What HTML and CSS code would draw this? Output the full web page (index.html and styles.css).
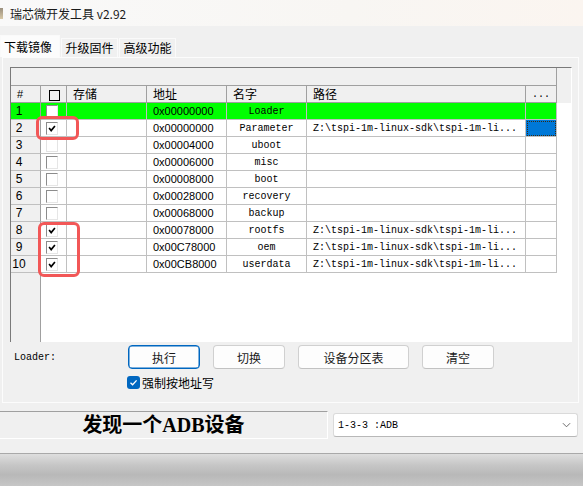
FILE: index.html
```html
<!DOCTYPE html>
<html>
<head>
    <meta charset="UTF-8">
    <link rel="stylesheet" href="styles.css">
</head>
<body>
    <div class="window">
        <div class="titlebar">
            <span class="app-icon"></span>
            <span class="title">瑞芯微开发工具 v2.92</span>
        </div>

        <div class="tabs">
            <div class="tab active">下载镜像</div>
            <div class="tab">升级固件</div>
            <div class="tab">高级功能</div>
        </div>

        <div class="panel">
            <div class="grid">
                <div class="band"><div class="band-cell"></div><div></div></div>

                <div class="row head">
                    <div class="cell num">#</div>
                    <div class="cell chk"><span class="head-box"></span></div>
                    <div class="cell">存储</div>
                    <div class="cell">地址</div>
                    <div class="cell">名字</div>
                    <div class="cell">路径</div>
                    <div class="cell more">...</div>
                    <div class="fill"></div>
                </div>

                <div class="row current">
                    <div class="cell num">1</div>
                    <div class="cell chk"><span class="box"></span></div>
                    <div class="cell"></div>
                    <div class="cell addr">0x00000000</div>
                    <div class="cell name">Loader</div>
                    <div class="cell path"></div>
                    <div class="cell"></div>
                    <div class="fill"></div>
                </div>
                <div class="row">
                    <div class="cell num">2</div>
                    <div class="cell chk"><span class="box"><svg viewBox="0 0 12 12"><path d="M2.5 5.5 L5 8.5 L9.5 3"/></svg></span></div>
                    <div class="cell"></div>
                    <div class="cell addr">0x00000000</div>
                    <div class="cell name">Parameter</div>
                    <div class="cell path">Z:\tspi-1m-linux-sdk\tspi-1m-li...</div>
                    <div class="cell picked"></div>
                    <div class="fill"></div>
                </div>
                <div class="row">
                    <div class="cell num">3</div>
                    <div class="cell chk"><span class="box faint"></span></div>
                    <div class="cell"></div>
                    <div class="cell addr">0x00004000</div>
                    <div class="cell name">uboot</div>
                    <div class="cell path"></div>
                    <div class="cell"></div>
                    <div class="fill"></div>
                </div>
                <div class="row">
                    <div class="cell num">4</div>
                    <div class="cell chk"><span class="box"></span></div>
                    <div class="cell"></div>
                    <div class="cell addr">0x00006000</div>
                    <div class="cell name">misc</div>
                    <div class="cell path"></div>
                    <div class="cell"></div>
                    <div class="fill"></div>
                </div>
                <div class="row">
                    <div class="cell num">5</div>
                    <div class="cell chk"><span class="box"></span></div>
                    <div class="cell"></div>
                    <div class="cell addr">0x00008000</div>
                    <div class="cell name">boot</div>
                    <div class="cell path"></div>
                    <div class="cell"></div>
                    <div class="fill"></div>
                </div>
                <div class="row">
                    <div class="cell num">6</div>
                    <div class="cell chk"><span class="box"></span></div>
                    <div class="cell"></div>
                    <div class="cell addr">0x00028000</div>
                    <div class="cell name">recovery</div>
                    <div class="cell path"></div>
                    <div class="cell"></div>
                    <div class="fill"></div>
                </div>
                <div class="row">
                    <div class="cell num">7</div>
                    <div class="cell chk"><span class="box"></span></div>
                    <div class="cell"></div>
                    <div class="cell addr">0x00068000</div>
                    <div class="cell name">backup</div>
                    <div class="cell path"></div>
                    <div class="cell"></div>
                    <div class="fill"></div>
                </div>
                <div class="row">
                    <div class="cell num">8</div>
                    <div class="cell chk"><span class="box"><svg viewBox="0 0 12 12"><path d="M2.5 5.5 L5 8.5 L9.5 3"/></svg></span></div>
                    <div class="cell"></div>
                    <div class="cell addr">0x00078000</div>
                    <div class="cell name">rootfs</div>
                    <div class="cell path">Z:\tspi-1m-linux-sdk\tspi-1m-li...</div>
                    <div class="cell"></div>
                    <div class="fill"></div>
                </div>
                <div class="row">
                    <div class="cell num">9</div>
                    <div class="cell chk"><span class="box"><svg viewBox="0 0 12 12"><path d="M2.5 5.5 L5 8.5 L9.5 3"/></svg></span></div>
                    <div class="cell"></div>
                    <div class="cell addr">0x00C78000</div>
                    <div class="cell name">oem</div>
                    <div class="cell path">Z:\tspi-1m-linux-sdk\tspi-1m-li...</div>
                    <div class="cell"></div>
                    <div class="fill"></div>
                </div>
                <div class="row">
                    <div class="cell num">10</div>
                    <div class="cell chk"><span class="box"><svg viewBox="0 0 12 12"><path d="M2.5 5.5 L5 8.5 L9.5 3"/></svg></span></div>
                    <div class="cell"></div>
                    <div class="cell addr">0x00CB8000</div>
                    <div class="cell name">userdata</div>
                    <div class="cell path">Z:\tspi-1m-linux-sdk\tspi-1m-li...</div>
                    <div class="cell"></div>
                    <div class="fill"></div>
                </div>

                <div class="grid-rest"><div class="rest-head"></div></div>

                <!-- 红框标注 -->
                <div class="mark mark-one"></div>
                <div class="mark mark-two"></div>
            </div>

            <div class="actions">
                <span class="loader-label">Loader:</span>
                <button class="btn primary">执行</button>
                <button class="btn">切换</button>
                <button class="btn wide">设备分区表</button>
                <button class="btn">清空</button>
            </div>

            <label class="force">
                <span class="force-box"><svg viewBox="0 0 13 13"><path d="M3.5 6.8 L5.6 8.8 L9.6 4.4"/></svg></span>
                强制按地址写
            </label>
        </div>

        <div class="statusbar">
            <div class="status">发现一个ADB设备</div>
            <div class="combo">
                <span>1-3-3 :ADB</span>
                <svg class="chevron" viewBox="0 0 10 6"><path d="M1 1 L5 5 L9 1"/></svg>
            </div>
        </div>
    </div>
    <div class="desk"></div>
</body>
</html>
```

FILE: styles.css
```css
:root {
    --face: #f0f0f0;
    --line: #c0c0c0;
    --dark-line: #a0a0a0;
    --green: #00ff00;
    --accent: #0067c0;
}

body {
    margin: 0;
    width: 583px;
    height: 486px;
    overflow: hidden;
    background: #c4c4c4;
    font-family: "Noto Sans CJK SC", "Liberation Sans", sans-serif;
    color: #000;
}

.window {
    height: 453px;
    background: var(--face);
    display: flex;
    flex-direction: column;
    border-bottom: 1px solid #a9a9a9;
}

.titlebar {
    height: 26px;
    display: flex;
    align-items: center;
    background: linear-gradient(90deg, #f9f9f9 0%, #f8f6f3 60%, #fbf5f0 100%);
    font-size: 12px;
    color: #1b1b1b;
}

.app-icon {
    width: 3px;
    height: 11px;
    background: linear-gradient(#9a8f7e, #d8c9a8);
}

.title {
    margin-left: 7px;
}

.tabs {
    margin-top: 9px;
    height: 22px;
    display: flex;
    align-items: flex-end;
}

.tab {
    box-sizing: border-box;
    width: 57px;
    height: 19px;
    margin-left: 1px;
    border: 1px solid #fafafa;
    border-bottom: none;
    background: #f0f0f0;
    font-size: 12px;
    line-height: 18px;
    text-align: center;
}

.tab.active {
    width: 60px;
    height: 22px;
    margin-left: 0;
    background: #fcfcfc;
    line-height: 21px;
    text-align: left;
    padding-left: 3px;
}

.panel {
    box-sizing: border-box;
    height: 346px;
    margin: 0 4px 0 2px;
    border: 1px solid #fcfcfc;
    padding: 9px 0 0 7px;
}

/* 分区表格 */
.grid {
    position: relative;
    box-sizing: border-box;
    width: 562px;
    height: 275px;
    background: #fff;
    border-top: 1px solid #7a7a7a;
    border-left: 1px solid #7a7a7a;
    border-right: 1px solid #fff;
    display: flex;
    flex-direction: column;
}

.band {
    display: grid;
    grid-template-columns: 546px 1fr;
    height: 18px;
    flex-shrink: 0;
    background: var(--face);
}

.band-cell {
    border-right: 1px solid var(--dark-line);
    border-bottom: 1px solid var(--dark-line);
}

.row {
    display: grid;
    grid-template-columns: 30px 26px 80px 80px 80px 219px 31px 1fr;
    height: 17px;
    flex-shrink: 0;
}

.cell {
    box-sizing: border-box;
    border-right: 1px solid var(--line);
    border-bottom: 1px solid var(--line);
    font-size: 11px;
    line-height: 17px;
    white-space: nowrap;
    overflow: hidden;
}

.head .cell {
    background: var(--face);
    border-color: var(--dark-line);
    font-size: 12px;
    line-height: 16px;
    padding-left: 6px;
}

.head .fill {
    background: var(--face);
}

.head .num {
    font-family: "Liberation Sans", sans-serif;
    font-size: 11px;
    text-align: left;
}

.head .chk {
    padding-left: 8px;
    display: flex;
    align-items: center;
}

.head-box {
    width: 9px;
    height: 9px;
    border: 1px solid #000;
}

.head .more {
    padding-left: 0;
    text-align: center;
    font-family: "Liberation Mono", monospace;
    font-size: 10px;
    line-height: 18px;
}

.num {
    background: var(--face);
    border-right-color: var(--dark-line);
    padding-right: 13px;
    text-align: center;
    font-family: "Liberation Sans", sans-serif;
    font-size: 12px;
}

.chk {
    padding: 2px 0 0 5px;
}

.box {
    display: block;
    box-sizing: border-box;
    width: 12px;
    height: 13px;
    background: #fff;
    border-top: 1px solid #8c8c8c;
    border-left: 1px solid #8c8c8c;
    border-right: 1px solid #e6e6e6;
    border-bottom: 1px solid #e6e6e6;
}

.box.faint {
    border-color: #e4e4e4;
}

.box svg {
    display: block;
    width: 10px;
    height: 11px;
}

.box path {
    fill: none;
    stroke: #000;
    stroke-width: 2;
}

.addr {
    padding-left: 6px;
    font-family: "Liberation Sans", sans-serif;
}

.name {
    text-align: center;
    font-family: "Liberation Mono", monospace;
    font-size: 10px;
}

.path {
    padding-left: 6px;
    font-family: "Liberation Mono", monospace;
    font-size: 10px;
}

.current .cell {
    background: var(--green);
}

.current .chk .box {
    background: #fff;
}

.picked {
    background: #0078d7;
    outline: 1px dotted #3a2a10;
    outline-offset: -2px;
}

.grid-rest {
    flex: 1;
    display: flex;
}

.rest-head {
    width: 29px;
    background: var(--face);
    border-right: 1px solid var(--dark-line);
}

.mark {
    position: absolute;
    box-sizing: border-box;
    border: 3px solid #f25757;
    border-radius: 6px;
}

.mark-one {
    left: 25px;
    top: 48px;
    width: 43px;
    height: 24px;
}

.mark-two {
    left: 27px;
    top: 154px;
    width: 42px;
    height: 55px;
}

/* 按钮区 */
.actions {
    display: flex;
    align-items: center;
    gap: 13px;
    margin-top: 3px;
    padding-left: 4px;
}

.loader-label {
    width: 101px;
    font-family: "Liberation Mono", monospace;
    font-size: 10px;
}

.btn {
    box-sizing: border-box;
    width: 72px;
    height: 24px;
    padding: 0;
    background: #fdfdfd;
    border: 1px solid #d0d0d0;
    border-bottom-color: #c2c2c2;
    border-radius: 4px;
    font-family: "Noto Sans CJK SC", sans-serif;
    font-size: 12px;
    color: #1a1a1a;
}

.btn.primary {
    border: 1px solid var(--accent);
    box-shadow: inset 0 0 0 0.5px var(--accent);
}

.btn.wide {
    width: 111px;
}

.force {
    display: flex;
    align-items: center;
    gap: 2px;
    margin-top: 6px;
    padding-left: 117px;
    font-size: 12px;
    height: 15px;
}

.force-box {
    width: 13px;
    height: 13px;
    border-radius: 3px;
    background: var(--accent);
}

.force-box svg {
    display: block;
    width: 13px;
    height: 13px;
}

.force-box path {
    fill: none;
    stroke: #fff;
    stroke-width: 1.3;
}

/* 状态栏 */
.statusbar {
    display: flex;
    margin-top: 8px;
}

.status {
    box-sizing: border-box;
    width: 328px;
    height: 28px;
    border-top: 1px solid var(--dark-line);
    border-bottom: 1px solid #fff;
    border-right: 1px solid #fff;
    text-align: center;
    font-family: "Liberation Serif", "Noto Sans CJK SC", serif;
    font-weight: bold;
    font-size: 20px;
    line-height: 27px;
}

.combo {
    box-sizing: border-box;
    width: 245px;
    height: 24px;
    margin: 2px 0 0 5px;
    display: flex;
    align-items: center;
    justify-content: space-between;
    padding: 0 6px 0 4px;
    background: #fff;
    border: 1px solid #dadada;
    border-bottom-color: #b8b8b8;
    border-radius: 3px;
    font-family: "Liberation Mono", monospace;
    font-size: 10px;
}

.chevron {
    width: 9px;
    height: 6px;
}

.chevron path {
    fill: none;
    stroke: #5a5a5a;
    stroke-width: 1;
}

.desk {
    height: 32px;
    background: linear-gradient(#dedede 0%, #c6c6c6 35%, #b8b8b8 65%, #c6c6c6 100%);
}
```
